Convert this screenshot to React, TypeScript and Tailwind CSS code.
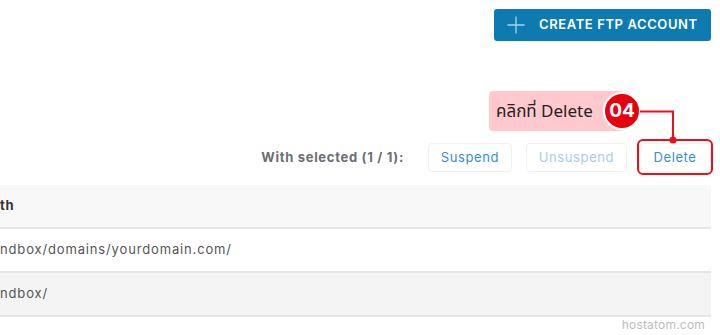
import React from "react";

export default function App() {
  const font = { fontFamily: "Inter, 'Noto Sans', sans-serif" };
  return (
    <div className="relative w-[720px] h-[335px] overflow-hidden bg-white" style={font}>
      {/* top bar */}
      <div className="flex justify-end pr-[9px] pt-[9px]">
        <button className="flex h-[32px] w-[217px] items-center rounded-[3px] bg-[#0e7bb0] pl-[13px] text-white">
          <svg width="18" height="18" viewBox="0 0 18 18" className="mr-[14px]">
            <path d="M9 0.5V17.5M0.5 9H17.5" stroke="#a9d3ea" strokeWidth="1.3" />
          </svg>
          <span className="text-[13px] font-semibold tracking-[0.6px]">CREATE FTP ACCOUNT</span>
        </button>
      </div>

      {/* action row */}
      <div className="mt-[102px] flex items-center justify-end pr-[9px]">
        <span className="mr-[24px] text-[13px] font-bold tracking-[0.7px] text-[#6b6e74]">With selected (1 / 1):</span>
        <button className="h-[29px] w-[84px] rounded-[4px] border border-[#f1f1f1] text-[13px] tracking-[0.6px] text-[#3a8dcf]">
          Suspend
        </button>
        <button className="ml-[14px] h-[29px] w-[101px] rounded-[4px] border border-[#f1f1f1] text-[13px] tracking-[0.6px] text-[#a9cde8]">
          Unsuspend
        </button>
        <div className="relative ml-[12px]">
          <button className="h-[29px] w-[72px] rounded-[4px] border border-[#f1f1f1] text-[13px] tracking-[0.6px] text-[#3a8dcf]">
            Delete
          </button>
          <div className="absolute -bottom-[3px] -left-[2px] -right-[2px] -top-[4px] rounded-[6px] border-2 border-[#e8101a]" />
        </div>
      </div>

      {/* table */}
      <div className="mt-[13px] mr-[9px]">
        <div className="flex h-[44px] items-center border-b-2 border-[#e6e6e6] bg-[#f8f8f8]">
          <span className="text-[13px] font-bold tracking-[0.6px] text-[#333]">th</span>
        </div>
        <div className="flex h-[44px] items-center border-b-2 border-[#e6e6e6] bg-white">
          <span className="text-[13px] tracking-[0.85px] text-[#555]">ndbox/domains/yourdomain.com/</span>
        </div>
        <div className="flex h-[44px] items-center border-b-2 border-[#e6e6e6] bg-[#f4f4f4]">
          <span className="text-[13px] tracking-[0.85px] text-[#555]">ndbox/</span>
        </div>
      </div>

      {/* watermark */}
      <div className="absolute bottom-[1px] right-[15px] text-[12px] tracking-[0.2px] text-[#bdbdbd]">hostatom.com</div>

      {/* annotation */}
      <div className="absolute left-[489px] top-[91px] flex h-[40px] w-[135px] items-center rounded-[4px] bg-[#ffc9cd] pl-[7px] text-[17px] text-[#222]" style={{ fontFamily: "'Noto Sans', 'Noto Sans Thai', sans-serif" }}>
        คลิกที่ Delete
      </div>
      <div className="absolute left-[603px] top-[92px] flex h-[38px] w-[38px] items-center justify-center rounded-full border-2 border-white bg-[#e8000b] text-[19px] font-bold text-white">
        04
      </div>
      <svg className="absolute left-[640px] top-[108px]" width="40" height="40" viewBox="0 0 40 40">
        <path d="M0 3.5H33V32" fill="none" stroke="#e8101a" strokeWidth="2" />
        <circle cx="33" cy="32" r="3.5" fill="#e8101a" />
      </svg>
    </div>
  );
}
